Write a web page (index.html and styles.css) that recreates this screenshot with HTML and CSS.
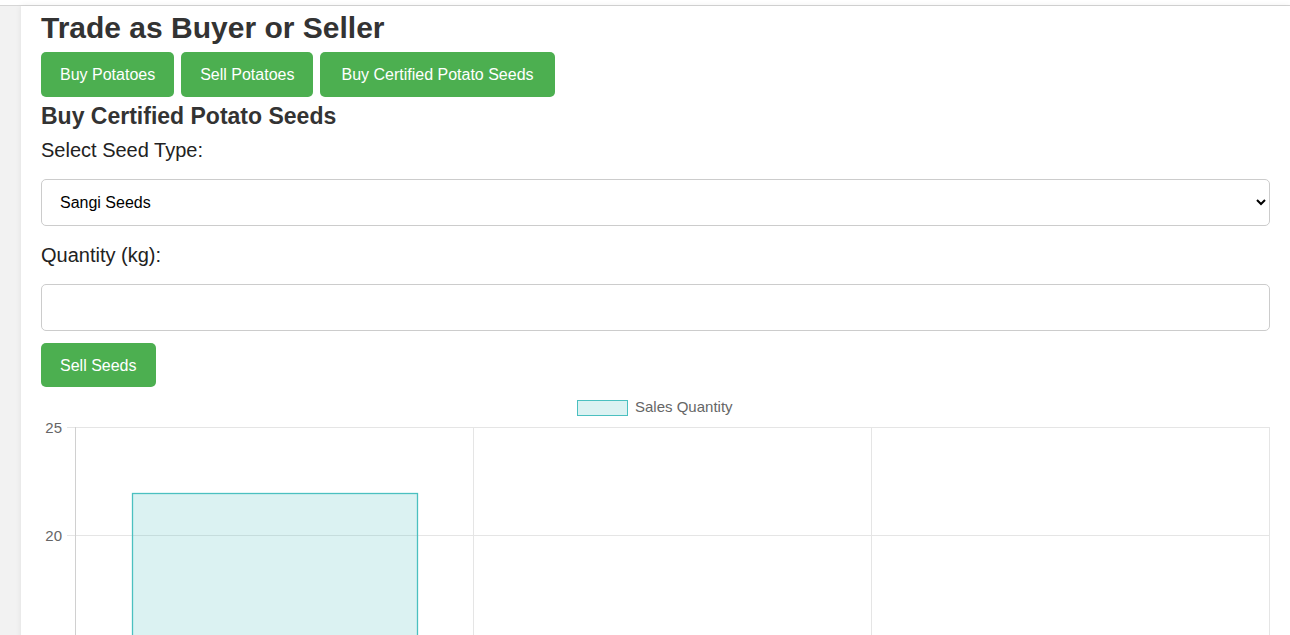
FILE: index.html
```html
<!DOCTYPE html>
<html lang="en">
<head>
<meta charset="utf-8">
<title>Trade as Buyer or Seller</title>
<link rel="stylesheet" href="styles.css">
</head>
<body>
<div class="topbar"></div>
<div class="page">
  <main class="container">
    <h1 class="title">Trade as Buyer or Seller</h1>
    <div class="tabs">
      <button class="btn">Buy Potatoes</button>
      <button class="btn">Sell Potatoes</button>
      <button class="btn btn-wide">Buy Certified Potato Seeds</button>
    </div>
    <h2 class="subtitle">Buy Certified Potato Seeds</h2>
    <form class="form">
      <label class="label" for="seed">Select Seed Type:</label>
      <select class="field select" id="seed">
        <option>Sangi Seeds</option>
        <option>Shangi Seeds</option>
      </select>
      <label class="label" for="qty">Quantity (kg):</label>
      <input class="field input" id="qty" type="number">
      <div class="actions"><button type="button" class="btn btn-submit">Sell Seeds</button></div>
    </form>
    <div class="chart">
      <svg class="chart-svg" width="1229" height="260" viewBox="0 0 1229 260">
        <rect x="536.5" y="10.5" width="50" height="15" fill="rgba(75,192,192,0.2)" stroke="rgb(75,192,192)" stroke-width="1"/>
        <text x="594" y="22.3" font-size="15" fill="#666">Sales Quantity</text>
        <g stroke="#e5e5e5" stroke-width="1">
          <line x1="26" y1="37.5" x2="1229" y2="37.5"/>
          <line x1="26" y1="145.5" x2="1229" y2="145.5"/>
          <line x1="432.5" y1="37" x2="432.5" y2="260"/>
          <line x1="830.5" y1="37" x2="830.5" y2="260"/>
          <line x1="1228.5" y1="37" x2="1228.5" y2="260"/>
        </g>
        <line x1="34.5" y1="37" x2="34.5" y2="260" stroke="#d0d0d0" stroke-width="1"/>
        <text x="21" y="42.5" font-size="15" fill="#666" text-anchor="end">25</text>
        <text x="21" y="150.5" font-size="15" fill="#666" text-anchor="end">20</text>
        <rect x="91.5" y="103.5" width="285" height="200" fill="rgba(75,192,192,0.2)" stroke="rgb(75,192,192)" stroke-width="1.3"/>
      </svg>
    </div>
  </main>
</div>
</body>
</html>
```

FILE: styles.css
```css
* { box-sizing: border-box; }

html, body {
  margin: 0;
  padding: 0;
  background: #f2f2f2;
  font-family: "Liberation Sans", Arial, sans-serif;
  color: #333;
  overflow: hidden;
}

.topbar {
  height: 6px;
  background: #fff;
  border-bottom: 1px solid #d6d6d6;
}

.page {
  padding-left: 21px;
}

.container {
  background: #fff;
  box-shadow: 0 0 6px rgba(0, 0, 0, 0.08);
  padding: 5px 20px 0 20px;
  min-height: 700px;
}

.title {
  margin: 0;
  font-size: 30px;
  line-height: 34px;
  font-weight: bold;
  color: #333;
}

.tabs {
  display: flex;
  gap: 7px;
  margin-top: 7px;
}

.btn {
  background: #4caf50;
  color: #fff;
  border: none;
  border-radius: 5px;
  padding: 14px 19px;
  font-family: "Liberation Sans", Arial, sans-serif;
  font-size: 16px;
  line-height: 17px;
  cursor: pointer;
}

.btn-wide {
  padding: 14px 21px;
}

.btn-submit {
  padding: 14px 19px 13px;
}

.subtitle {
  margin: 6px 0 0 0;
  font-size: 23px;
  line-height: 26px;
  font-weight: bold;
  color: #333;
}

.form {
  display: flex;
  flex-direction: column;
  margin-top: 10px;
}

.label {
  display: block;
  font-size: 20px;
  line-height: 23px;
  color: #222;
}

.field {
  display: block;
  width: 100%;
  height: 47px;
  margin: 17px 0 18px 0;
  border: 1px solid #ccc;
  border-radius: 5px;
  background: #fff;
  font-family: "Liberation Sans", Arial, sans-serif;
  font-size: 16px;
  color: #000;
  padding: 0 18px 0 14px;
}

.input {
  margin-bottom: 12px;
}

.chart {
  margin-top: 3px;
}

.chart-svg {
  display: block;
  font-family: "Liberation Sans", Arial, sans-serif;
}
```
